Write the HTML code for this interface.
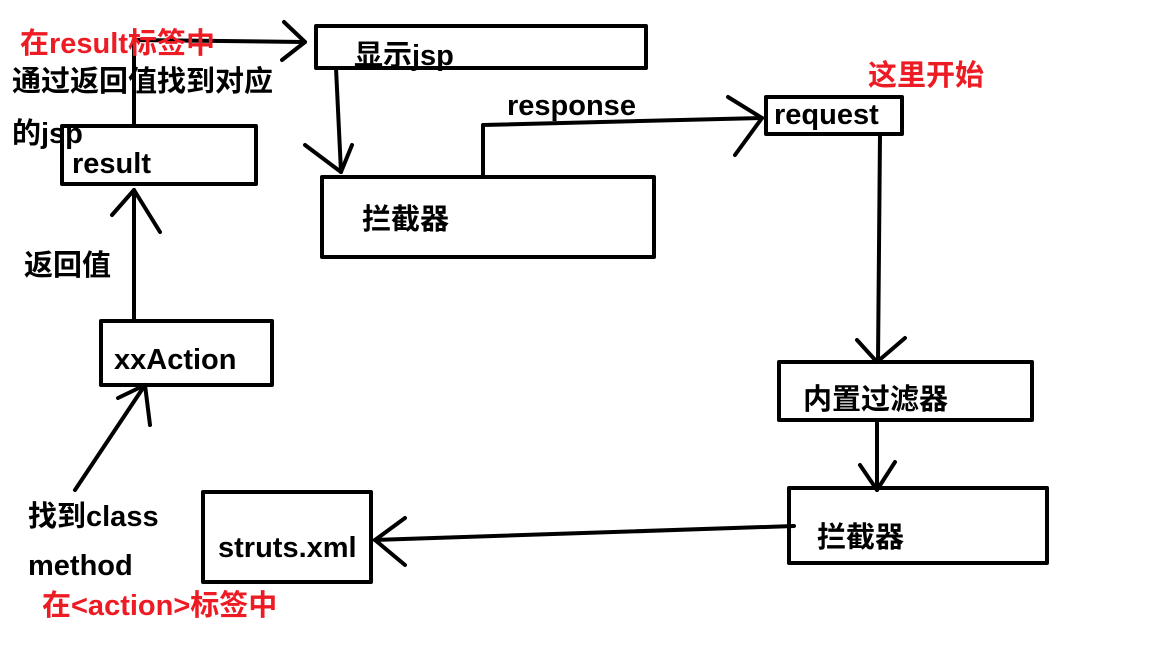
<!DOCTYPE html>
<html><head><meta charset="utf-8"><style>
html,body{margin:0;padding:0;background:#fff;width:1152px;height:648px;overflow:hidden}
svg text{font-family:"Liberation Sans","Noto Sans CJK SC",sans-serif;font-weight:bold;font-size:29px;fill:#000}
.r{fill:#ed1c24}
</style></head><body>
<svg width="1152" height="648" viewBox="0 0 1152 648" xmlns="http://www.w3.org/2000/svg">
<g fill="none" stroke="#000" stroke-width="4" stroke-linecap="round" stroke-linejoin="round">
<rect x="316" y="26" width="330" height="42"/>
<rect x="766" y="97" width="136" height="37"/>
<rect x="322" y="177" width="332" height="80"/>
<rect x="62" y="126" width="194" height="58"/>
<rect x="101" y="321" width="171" height="64"/>
<rect x="779" y="362" width="253" height="58"/>
<rect x="789" y="488" width="258" height="75"/>
<rect x="203" y="492" width="168" height="90"/>
<polyline points="134,126 134,40 305,42"/>
<polyline points="284,22 305,42 282,60"/>
<line x1="336" y1="68" x2="341" y2="172"/>
<polyline points="305,145 341,172 352,145"/>
<polyline points="483,176 483,125 762,118"/>
<polyline points="728,97 762,118 735,155"/>
<line x1="880" y1="134" x2="878" y2="362"/>
<polyline points="857,340 877,362 905,338"/>
<line x1="877" y1="420" x2="877" y2="490"/>
<polyline points="860,465 877,490 895,462"/>
<line x1="794" y1="526" x2="375" y2="540"/>
<polyline points="405,518 375,540 405,565"/>
<line x1="134" y1="321" x2="134" y2="190"/>
<polyline points="112,215 134,190 160,232"/>
<line x1="75" y1="490" x2="145" y2="385"/>
<polyline points="118,398 145,385 150,425"/>
</g>
<text class="r" x="20" y="53">在result标签中</text>
<text x="12" y="91">通过返回值找到对应</text>
<text x="12" y="143">的jsp</text>
<text x="72" y="173">result</text>
<text x="24" y="275">返回值</text>
<text x="114" y="369">xxAction</text>
<text x="28" y="526">找到class</text>
<text x="28" y="575">method</text>
<text class="r" x="42" y="615">在&lt;action&gt;标签中</text>
<text x="218" y="557">struts.xml</text>
<text x="354" y="65">显示jsp</text>
<text x="362" y="229">拦截器</text>
<text x="507" y="115">response</text>
<text class="r" x="868" y="85">这里开始</text>
<text x="774" y="124">request</text>
<text x="803" y="409">内置过滤器</text>
<text x="817" y="547">拦截器</text>
</svg>
</body></html>
